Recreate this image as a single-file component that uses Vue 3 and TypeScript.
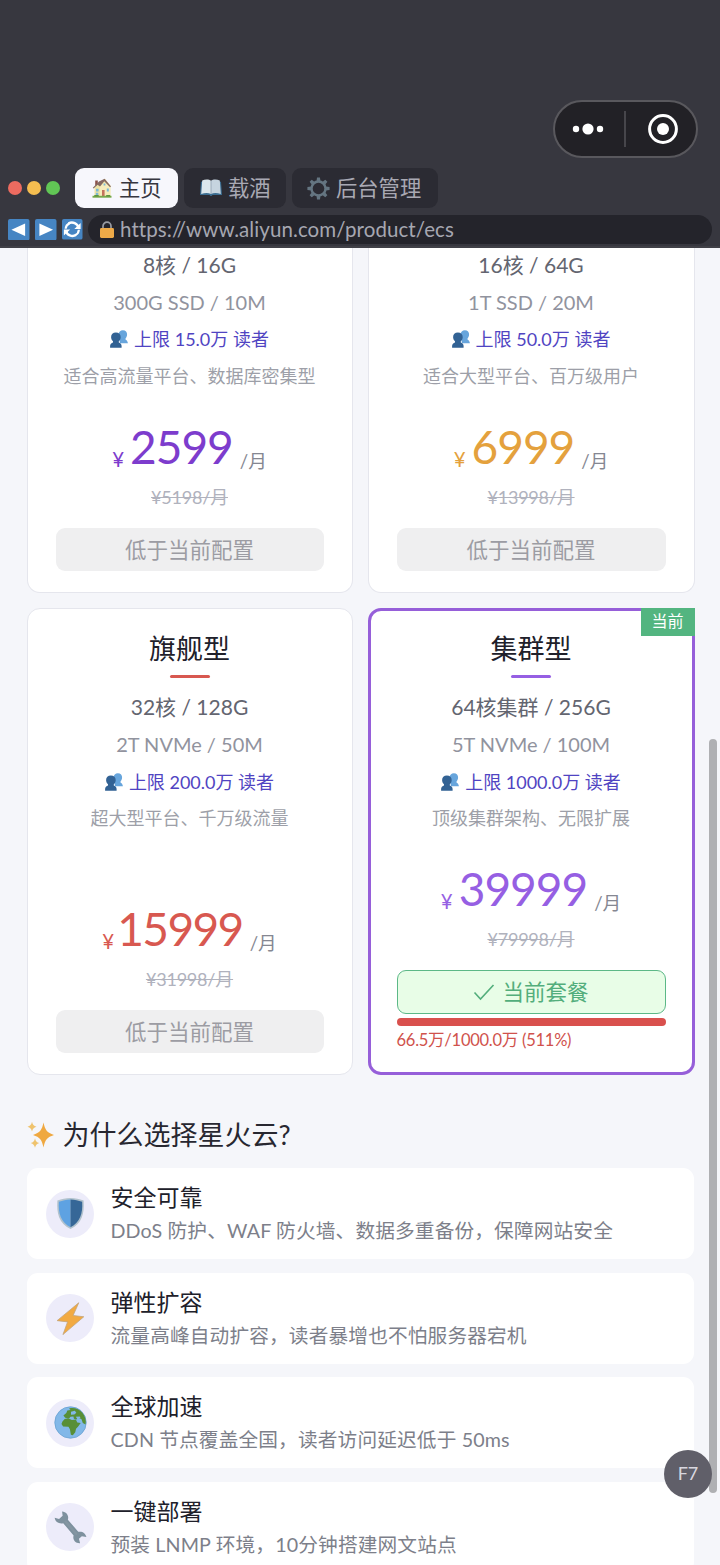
<script setup lang="ts">
interface Plan {
  key: string
  name?: string
  spec: string
  disk: string
  limit: string
  desc: string
  price: string
  original: string
  current?: boolean
}

interface Feature {
  icon: 'shield' | 'bolt' | 'globe' | 'wrench'
  title: string
  desc: string
}

const plans: Plan[] = [
  { key: 'violet', spec: '8核 / 16G', disk: '300G SSD / 10M', limit: '15.0', desc: '适合高流量平台、数据库密集型', price: '2599', original: '¥5198/月' },
  { key: 'amber', spec: '16核 / 64G', disk: '1T SSD / 20M', limit: '50.0', desc: '适合大型平台、百万级用户', price: '6999', original: '¥13998/月' },
  { key: 'red', name: '旗舰型', spec: '32核 / 128G', disk: '2T NVMe / 50M', limit: '200.0', desc: '超大型平台、千万级流量', price: '15999', original: '¥31998/月' },
  { key: 'purple', name: '集群型', spec: '64核集群 / 256G', disk: '5T NVMe / 100M', limit: '1000.0', desc: '顶级集群架构、无限扩展', price: '39999', original: '¥79998/月', current: true },
]

const features: Feature[] = [
  { icon: 'shield', title: '安全可靠', desc: 'DDoS 防护、WAF 防火墙、数据多重备份，保障网站安全' },
  { icon: 'bolt', title: '弹性扩容', desc: '流量高峰自动扩容，读者暴增也不怕服务器宕机' },
  { icon: 'globe', title: '全球加速', desc: 'CDN 节点覆盖全国，读者访问延迟低于 50ms' },
  { icon: 'wrench', title: '一键部署', desc: '预装 LNMP 环境，10分钟搭建网文站点' },
]
</script>

<template>
  <div class="screen">
    <header class="chrome">
      <div class="capsule">
        <svg class="capsule-dots" viewBox="0 0 32 12">
          <circle cx="4" cy="6" r="3.2" /><circle cx="16" cy="6" r="5.6" /><circle cx="28" cy="6" r="3.2" />
        </svg>
        <span class="capsule-line"></span>
        <svg class="capsule-target" viewBox="0 0 30 30">
          <circle cx="15" cy="15" r="13.4" fill="none" stroke="#fff" stroke-width="3" />
          <circle cx="15" cy="15" r="6" fill="#fff" />
        </svg>
      </div>

      <div class="tabs">
        <span class="light light-red"></span>
        <span class="light light-yellow"></span>
        <span class="light light-green"></span>
        <div class="tab tab-home active">
          <svg class="tab-icon" viewBox="0 0 20 20">
            <path d="M3.2 2.500h2.600v5H3.200z" fill="#8a5148" />
            <path d="M2.500 9.500 8 4l5-3.200 5.200 6.500V18.500H2.500z" fill="#efe3a5" />
            <path d="M8 18.500V8.500l4.500-4 6 4.500v9.500z" fill="#f6edbb" />
            <path d="M.8 9.800 7 3.600 12.600.8l6.400 7.600-.9.8-5.800-6L8 8.600 5.600 6.700 1.600 10.600z" fill="#856a62" />
            <path d="M4 10.700h2.600v2.700H4zM14.800 10.600h2v2.800h-2zM11.600 5.600h1.800v2h-1.800zM3.800 14.800h2.500V17H3.800z" fill="#79b9d6" />
            <path d="M10 12h2.600v6.500H10z" fill="#c4735d" />
            <path d="M.5 17.800h19v1.900H.5z" fill="#78a94c" />
            <path d="M2.300 17h4.400v1.500H2.300zM14.200 17h4v1.500h-4z" fill="#5d963f" />
          </svg>
          <span>主页</span>
        </div>
        <div class="tab tab-read">
          <svg class="tab-icon book" viewBox="0 0 22 18">
            <path d="M1 2.800h20L22 16H12.500l-1 1h-1l-1-1H0z" fill="#3b6d91" />
            <path d="M2.200 1.500C5 .2 9 .1 11 1.800V15c-3-1.500-6.200-1.200-9.800 0z" fill="#dce7ec" />
            <path d="M19.800 1.500C17 .2 13 .1 11 1.800V15c3-1.500 6.200-1.200 9.800 0z" fill="#c6d4df" />
            <path d="M11 1.800V15" stroke="#8d9eae" stroke-width=".8" />
          </svg>
          <span>载酒</span>
        </div>
        <div class="tab tab-admin">
          <svg class="tab-icon gear" viewBox="-11 -11 22 22">
            <g fill="#647581">
              <path v-for="n in 8" :key="n" d="M-1.900-7-1.400-10.600h2.800l.5 3.600z" :transform="`rotate(${n * 45})`" />
            </g>
            <circle r="6.700" fill="none" stroke="#647581" stroke-width="2.300" />
          </svg>
          <span>后台管理</span>
        </div>
      </div>

      <div class="address-row">
        <svg class="nav" viewBox="0 0 22 22"><rect width="22" height="22" rx="2" fill="#4685c3" /><path d="M17.500 4.500v13L3.500 11z" fill="#fff" /></svg>
        <svg class="nav" viewBox="0 0 22 22"><rect width="22" height="22" rx="2" fill="#4685c3" /><path d="M4.500 4.500v13l14-6.500z" fill="#fff" /></svg>
        <svg class="nav reload" viewBox="0 0 22 22">
          <rect width="22" height="22" rx="2" fill="#4685c3" />
          <path d="M7 4.800A7.300 7.300 0 0 1 17.800 9.500M15 17.200A7.300 7.300 0 0 1 4.200 12.500" fill="none" stroke="#fff" stroke-width="2.600" />
          <path d="M3.900 10.500A7.200 7.200 0 0 1 8 4.500M18.100 11.500A7.200 7.200 0 0 1 14 17.500" fill="none" stroke="#fff" stroke-width="2.300" />
          <path d="M20 4.200v6.600h-6.800zM2 17.800v-6.600h6.800z" fill="#fff" />
        </svg>
        <div class="address">
          <svg class="lock" viewBox="0 0 14 17">
            <path d="M3 8V5.200a4 4 0 0 1 8 0V8" fill="none" stroke="#989ba2" stroke-width="1.700" />
            <rect y="7" width="14" height="10" rx="1.400" fill="#eeaa48" />
          </svg>
          <span>https://www.aliyun.com/product/ecs</span>
        </div>
      </div>
    </header>

    <main class="page">
      <section class="plans">
        <article v-for="plan in plans" :key="plan.key" class="plan" :class="[plan.key, { clipped: !plan.name, current: plan.current }]">
          <span v-if="plan.current" class="badge">当前</span>
          <template v-if="plan.name">
            <h2 class="plan-name">{{ plan.name }}</h2>
            <span class="plan-rule"></span>
          </template>
          <p class="spec">{{ plan.spec }}</p>
          <p class="disk">{{ plan.disk }}</p>
          <p class="limit">
            <svg class="people" viewBox="0 0 18 18">
              <path d="M12.900.2c2.700 0 4.400 1.900 4.200 4.600-.2 1.900-.9 3-1.700 3.900 0 1.500 2.300 1.300 2.500 4.500H10L8.500 4.600C8.700 1.800 10.300.2 12.900.2z" fill="#67a5dc" />
              <path d="M5.900 2.500c3 0 4.900 1.900 4.800 4.700-.1 2-.9 3.200-1.900 4.100v1.200c1.500.7 2.800 1.300 2.800 3.600v1.600H.1v-1.600c0-2.300 1.400-2.900 2.900-3.600v-1.200C2 10.400 1.200 9.200 1.100 7.200 1 4.400 2.900 2.500 5.900 2.500z" fill="#326294" />
            </svg>
            <span>上限 {{ plan.limit }}万 读者</span>
          </p>
          <p class="desc">{{ plan.desc }}</p>
          <div class="offer">
            <p class="price"><span class="yen">¥</span><span class="amount">{{ plan.price }}</span><span class="unit">/月</span></p>
            <p class="original"><s>{{ plan.original }}</s></p>
            <template v-if="plan.current">
              <div class="button selected">
                <svg class="check" viewBox="0 0 22 18"><path d="M1.500 9.500 7.500 16 20.500 2" fill="none" stroke="currentColor" stroke-width="1.600" /></svg>
                <span>当前套餐</span>
              </div>
              <div class="usage-bar"></div>
              <p class="usage">66.5万/1000.0万 (511%)</p>
            </template>
            <div v-else class="button"><span>低于当前配置</span></div>
          </div>
        </article>
      </section>

      <h2 class="section-title">
        <svg class="sparkles" viewBox="0 0 28 28">
          <path d="M16.500 1.500c1.500 7.500 3.500 10 10.500 12.500-7 2.300-9 5-10.500 12.500C15 19 13 16.300 6 14c7-2.500 9-5 10.500-12.500z" fill="#efa840" />
          <path d="M5 .8c.7 3 1.700 4 4.500 4.900C6.700 6.600 5.700 7.600 5 10.500 4.300 7.600 3.300 6.600.5 5.700 3.300 4.800 4.300 3.800 5 .8zM8 17.200c.7 3 1.600 4 4.300 4.900-2.700.9-3.600 1.900-4.300 4.700-.7-2.800-1.600-3.800-4.300-4.700 2.700-.9 3.600-1.900 4.300-4.900z" fill="#efc36d" />
        </svg>
        <span>为什么选择星火云?</span>
      </h2>

      <section class="features">
        <article v-for="feature in features" :key="feature.icon" class="feature">
          <div class="feature-icon">
            <svg v-if="feature.icon === 'shield'" viewBox="0 0 34 34">
              <path d="M17 1c5 .4 9 .8 13.500 2.500.9 14-1.500 23-13.500 29.500C5 26.500 2.600 17.500 3.500 3.500 8 1.800 12 1.400 17 1z" fill="#b2c2cd" />
              <path d="M17 2.500V31.200C7 26 4.300 17.500 5 5c4-1.500 7.500-2.100 12-2.500z" fill="#5ea2e2" />
              <path d="M17 2.500V31.200C27 26 29.700 17.500 29 5c-4-1.500-7.500-2.100-12-2.500z" fill="#366797" />
            </svg>
            <svg v-else-if="feature.icon === 'bolt'" viewBox="0 0 34 34">
              <path d="M25.500.8 3.200 19.200l10.800 1.300L9.200 33.600 30.700 15.200l-11-1.300z" fill="#f2aa42" stroke="#c1a57c" stroke-width=".8" />
            </svg>
            <svg v-else-if="feature.icon === 'globe'" viewBox="0 0 34 34">
              <circle cx="17" cy="17" r="16.200" fill="#82b8e8" stroke="#669fd0" stroke-width=".8" />
              <path d="M15.500 2.500c5-1.500 10.500.5 13.700 4.500 3 3.800 4.200 8 3.300 12l-2.800-1.500-1.500-4-3-1.200-2.200 1.700-2.500-.8-.5-2.500-3 .5-1.500 1.800-4-.8-1.800-2.500 3-2.500 1-2.500 3.300-.6z" fill="#588f36" />
              <path d="m11 13.500 3.500-1 4 1.800 4-.3 1.500 3 3.500.5-2.800 4-2 2-.8 3.500-2.500 3.200-2-.7-1-5.500-1.500-2.500-5.500-.5-1.700-2.500 1-2.500z" fill="#588f36" />
              <path d="m17.500 6 4-1 1.500 2-2 1.700-3.500.2zM22.500 11l4-.3.8 1.600-3.200 1.400z" fill="#82b8e8" />
            </svg>
            <svg v-else viewBox="0 0 34 34">
              <path d="M8.300.6c5 .5 7.200 4.400 6 8.300l10.700 12.600c3.800-1 7.700 1.200 8.400 5.400l-4.700-.8-3 2.500 1.200 4.700c-5.200.3-8-4.200-6.700-8.100L9.500 12.600C5.600 13.600 1.300 11.600.7 7l4.500 1.200L8.900 5z" fill="#7e919e" />
              <path d="m12 11 10.800 12.500" stroke="#8596a2" stroke-width="2.500" stroke-linecap="round" />
            </svg>
          </div>
          <div class="feature-copy">
            <h3>{{ feature.title }}</h3>
            <p>{{ feature.desc }}</p>
          </div>
        </article>
      </section>
    </main>

    <span class="scrollbar"></span>
    <span class="fab">F7</span>
  </div>
</template>

<style>
body {
  margin: 0;
  overflow: hidden;
}
</style>

<style scoped>
.screen {
  position: relative;
  display: flex;
  flex-direction: column;
  width: 720px;
  height: 1565px;
  overflow: hidden;
  background: #f5f6fa;
  font-family: Lato, "Noto Sans CJK SC", sans-serif;
  color: #20202a;
}
h2, h3, p { margin: 0; font-weight: 400; }
svg { display: block; flex: none; }

.chrome {
  display: flex;
  flex: none;
  flex-direction: column;
  box-sizing: border-box;
  height: 248px;
  padding-top: 100.400px;
  background: #37373f;
  border-bottom: 2px solid #404047;
}
.capsule {
  display: flex;
  align-items: center;
  align-self: flex-end;
  box-sizing: border-box;
  width: 145.500px;
  height: 58px;
  margin-right: 22px;
  padding: 0 19px 0 17.500px;
  border: 2px solid #59585d;
  border-radius: 29px;
  background: #222126;
}
.capsule-dots { width: 32px; height: 12px; fill: #fff; }
.capsule-line { width: 2px; height: 36px; margin-left: 20px; background: #47464b; }
.capsule-target { width: 30px; height: 30px; margin-left: auto; margin-right: -0.500px; }

.tabs { display: flex; align-items: center; height: 40px; margin-top: 10.100px; padding-left: 7.500px; }
.light { width: 14px; height: 14px; margin-right: 5px; border-radius: 50%; }
.light-red { background: #ed6b60; }
.light-yellow { background: #f4bd50; }
.light-green { background: #61c655; }
.tab {
  display: flex;
  align-items: center;
  box-sizing: border-box;
  height: 40px;
  margin-right: 6px;
  padding-left: 16px;
  border-radius: 9px;
  background: #2b2b33;
  color: #a9a9b3;
  font-size: 21.300px;
  line-height: 38px;
  white-space: nowrap;
}
.tab span { margin-top: 0; }
.tab-home { width: 103px; margin-left: 10.500px; padding-left: 17px; }
.tab-read { width: 102px; }
.tab-admin { width: 146px; padding-left: 15px; }
.tab.active { background: #f7f7fc; color: #36363f; }
.tab-icon { width: 20px; height: 20px; margin-right: 7px; }
.book { width: 22px; height: 18px; margin-right: 6px; }
.gear { width: 23px; height: 23px; margin-right: 6px; }

.address-row { display: flex; align-items: center; height: 29px; margin-top: 6.500px; padding-left: 8px; }
.nav { width: 21.500px; height: 21.500px; margin-right: 5.500px; }
.reload { width: 20.500px; height: 20.500px; margin-right: 5px; }
.address {
  display: flex;
  align-items: center;
  box-sizing: border-box;
  width: 624.500px;
  height: 29px;
  padding-left: 12.500px;
  border-radius: 15px;
  background: #24242b;
  color: #a6a7b1;
  font-size: 20.500px;
  letter-spacing: 0.080px;
}
.lock { width: 14px; height: 17px; margin-right: 6px; }

.page { flex: 1; min-height: 0; padding: 0 26.500px; overflow: hidden; }
.plans { display: grid; grid-template-columns: 326px 327px; grid-template-rows: 345px 467px; gap: 15px; }
.plan {
  position: relative;
  display: flex;
  flex-direction: column;
  align-items: center;
  box-sizing: border-box;
  padding: 20px 28px 21px;
  border: 1px solid #e5e6ed;
  border-radius: 13px;
  background: #fff;
  white-space: nowrap;
}
.plan.clipped { padding-top: 0; border-top: 0; border-radius: 0 0 13px 13px; }
.plan.current { padding: 18px 26px 19px; border: 3px solid #965fd9; }
.clipped .spec { margin-top: -2px; }
.violet { color: #7d3ccd; }
.amber { color: #e4a13d; }
.red { color: #d85850; }
.purple { color: #965fe3; }
.badge {
  position: absolute;
  top: -3px;
  right: -3px;
  width: 54px;
  height: 28px;
  background: #53b580;
  color: #fff;
  font-size: 16px;
  line-height: 26px;
  text-align: center;
}
.plan-name { color: #20202a; font-size: 27px; line-height: 40px; }
.plan-rule { flex: none; width: 40px; height: 2.500px; margin-top: 6px; border-radius: 2px; background: currentColor; }
.plan-rule + .spec { margin-top: 10px; }
.spec { color: #636570; font-size: 21px; line-height: 38px; }
.disk { color: #91939e; font-size: 20px; line-height: 37px; }
.clipped .disk { line-height: 36px; }
.limit { display: flex; align-items: center; color: #5044c2; font-size: 18px; line-height: 38px; }
.people { width: 18px; height: 18px; margin-right: 6px; }
.desc { color: #9d9fa8; font-size: 18px; line-height: 35px; }
.clipped .desc { line-height: 36px; }
.offer { display: flex; flex-direction: column; align-items: center; width: 100%; margin-top: auto; }
.price { display: flex; align-items: flex-end; height: 56px; margin-bottom: 4px; }
.yen { margin-right: 6px; font-size: 20.500px; line-height: 34px; }
.amount { margin-bottom: 1.500px; font-size: 46px; line-height: 56px; letter-spacing: -1px; }
.red .amount { margin-left: -3px; letter-spacing: -1.600px; }
.unit { margin-left: 7px; color: #858792; font-size: 18.600px; line-height: 29px; }
.original { color: #b0b2bd; font-size: 18px; line-height: 34px; letter-spacing: -0.200px; }
.button {
  display: flex;
  align-items: center;
  justify-content: center;
  box-sizing: border-box;
  width: 100%;
  height: 43px;
  margin-top: 14px;
  border-radius: 9px;
  background: #efeff0;
  color: #9c9ca3;
  font-size: 21.500px;
}
.button span { margin-top: -3px; }
.button.selected { height: 44px; border: 1.500px solid #5cb887; background: #e8fde7; color: #53ae7c; }
.check { width: 22px; height: 18px; margin-right: 7px; }
.usage-bar { width: 100%; height: 8px; margin-top: 4px; border-radius: 4px; background: #d9504d; }
.usage { align-self: flex-start; margin-top: 1px; margin-bottom: -1px; color: #d0524c; font-size: 16.500px; line-height: 27px; letter-spacing: -0.250px; }

.section-title { display: flex; align-items: center; height: 40px; margin-top: 40px; color: #272730; font-size: 27px; line-height: 40px; }
.sparkles { width: 28px; height: 28px; margin-right: 8px; }
.features { display: flex; flex-direction: column; gap: 13.600px; margin-top: 13px; }
.feature { display: flex; align-items: center; box-sizing: border-box; height: 91px; padding-left: 19.500px; border-radius: 11px; background: #fff; }
.feature-icon { display: flex; align-items: center; justify-content: center; width: 48px; height: 48px; border-radius: 50%; background: #edecfa; }
.feature-icon svg { width: 33px; height: 33px; }
.feature-copy { margin-left: 16.500px; white-space: nowrap; }
.feature h3 { font-size: 23px; line-height: 34px; }
.feature p { color: #7d7f8a; font-size: 19.700px; line-height: 33px; letter-spacing: 0.130px; }

.scrollbar { position: absolute; top: 739px; left: 709px; width: 8px; height: 754px; border-radius: 4px; background: #afb0b3; }
.fab {
  position: absolute;
  top: 1450px;
  left: 664px;
  width: 48px;
  height: 48px;
  border-radius: 50%;
  background: #605f69;
  color: #d8d7df;
  font-size: 18px;
  line-height: 47px;
  text-align: center;
}
</style>
